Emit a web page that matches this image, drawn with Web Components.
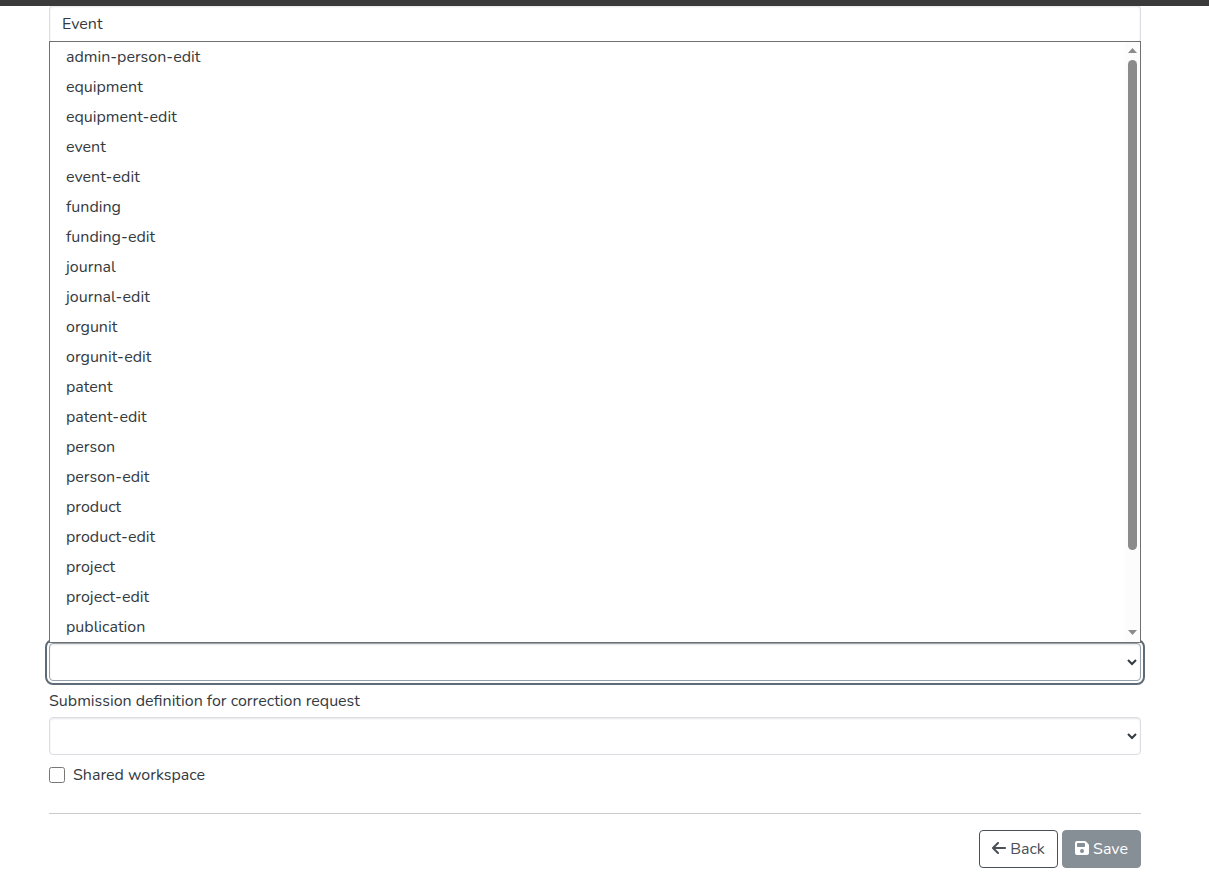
<!DOCTYPE html>
<html lang="en">
<head>
<meta charset="utf-8">
<meta name="viewport" content="width=device-width, initial-scale=1">
<title>Edit entity type</title>
<style>
  body { margin: 0; background: #fff; color: #343a40; font: 16px/24px Nunito, Lato, sans-serif; }
</style>
</head>
<body>
<entity-form></entity-form>
<script>
const control = `
  .control { box-sizing: border-box; display: block; width: 100%; height: 38px; margin: 0; padding: 6px 12px;
    font: inherit; color: inherit; background-color: #fff; border: 1px solid #dadee3; border-radius: 4px;
    box-shadow: inset 0 1px 2px rgba(0,0,0,.1); }
`;

function define(name, html, setup) {
  const template = document.createElement('template');
  template.innerHTML = html;
  customElements.define(name, class extends HTMLElement {
    connectedCallback() {
      if (this.shadowRoot) return;
      this.attachShadow({ mode: 'open' }).append(template.content.cloneNode(true));
      if (setup) setup(this, this.shadowRoot);
    }
  });
}

define('text-field', `
  <style>:host { display: block; } ${control}</style>
  <input class="control" type="text">
`, (host, root) => {
  const input = root.querySelector('input');
  input.value = host.getAttribute('value') || '';
  input.setAttribute('aria-label', host.getAttribute('name'));
});

define('select-field', `
  <style>
    :host { display: block; }
    ${control}
    label { display: block; margin-bottom: 4px; }
    label[hidden] { display: none; }
    :host([active]) .control { border-color: #98a2ab; outline: 2px solid #5f6b77; outline-offset: 2px; }
  </style>
  <label for="field"><slot></slot></label>
  <select class="control" id="field"><option value="" label=" "></option></select>
`, (host, root) => {
  if (!host.textContent.trim()) {
    root.querySelector('label').hidden = true;
    root.querySelector('select').setAttribute('aria-label', host.getAttribute('name'));
  }
});

define('option-list', `
  <style>
    :host { display: flex; position: relative; z-index: 1; background: #fff; border: 1px solid #6f7072; }
    ul { flex: 1; margin: 0; padding: 0; list-style: none; }
    li { padding: 3px 16px; }
    .scroll { display: flex; flex-direction: column; align-items: center; width: 15px; background: #fcfcfc; }
    .thumb { width: 9px; height: 490px; margin: 7px 0 auto; border-radius: 5px; background: #8b8b8b; }
    svg { display: block; width: 9px; height: 5px; margin: 6px 0 0; fill: #8b8b8b; }
    svg:last-child { margin: 0 0 7px; }
  </style>
  <ul role="listbox" aria-label="Submission definitions"></ul>
  <div class="scroll" aria-hidden="true">
    <svg viewBox="0 0 9 5"><path d="M4.500 0L9 5H0Z"/></svg>
    <div class="thumb"></div>
    <svg viewBox="0 0 9 5"><path d="M0 0H9L4.500 5Z"/></svg>
  </div>
`, (host, root) => {
  const list = root.querySelector('ul');
  for (const name of host.getAttribute('items').split(' ')) {
    const item = document.createElement('li');
    item.setAttribute('role', 'option');
    item.textContent = name;
    list.append(item);
  }
});

define('check-field', `
  <style>
    :host { display: block; }
    label { display: flex; align-items: center; gap: 8px; }
    input { width: 16px; height: 16px; margin: 0; }
  </style>
  <label><input type="checkbox"><slot></slot></label>
`);

define('action-button', `
  <style>
    :host { display: block; }
    button { display: flex; align-items: center; justify-content: center; gap: 4px; box-sizing: border-box;
      min-width: 79px; height: 38px; padding: 6px 12px; font: inherit; color: #495057;
      background: #fff; border: 1px solid #495057; border-radius: 4px; }
    :host([primary]) button { color: #fff; background: #868e96; border-color: #868e96; }
    ::slotted(svg) { display: block; width: 14px; height: 16px; margin-bottom: 2px; fill: currentColor; }
  </style>
  <button type="button"><slot name="icon"></slot><slot></slot></button>
`);

define('entity-form', `
  <style>
    :host { display: block; }
    header { position: relative; z-index: 2; height: 6px; background: #3b3a3b; }
    main { margin-top: -1px; padding: 0 68px 16px 49px; }
    option-list { margin-top: -2px; }
    .request { margin-top: 8px; }
    check-field { margin-top: 8px; }
    hr { margin: 26px 0 16px; border: 0; border-top: 1px solid #cacbcc; }
    footer { display: flex; justify-content: flex-end; gap: 4px; }
  </style>
  <header></header>
  <main>
    <text-field name="Label" value="Event"></text-field>
    <option-list items="admin-person-edit equipment equipment-edit event event-edit funding funding-edit journal journal-edit orgunit orgunit-edit patent patent-edit person person-edit product product-edit project project-edit publication"></option-list>
    <select-field active name="Submission definition"></select-field>
    <select-field class="request">Submission definition for correction request</select-field>
    <check-field>Shared workspace</check-field>
    <hr>
    <footer>
      <action-button>
        <svg slot="icon" viewBox="0 0 448 512" aria-hidden="true"><path d="M9.400 233.400c-12.500 12.500-12.500 32.800 0 45.300l160 160c12.500 12.500 32.800 12.500 45.300 0s12.500-32.800 0-45.300L109.200 288 416 288c17.700 0 32-14.300 32-32s-14.300-32-32-32l-306.700 0L214.600 118.600c12.500-12.500 12.500-32.800 0-45.300s-32.800-12.500-45.300 0l-160 160z"/></svg>Back</action-button>
      <action-button primary>
        <svg slot="icon" viewBox="0 0 448 512" aria-hidden="true"><path d="M64 32C28.700 32 0 60.700 0 96L0 416c0 35.300 28.700 64 64 64l320 0c35.300 0 64-28.700 64-64l0-242.700c0-17-6.700-33.300-18.700-45.300L352 50.700C340 38.700 323.700 32 306.700 32L64 32zm0 96c0-17.700 14.300-32 32-32l192 0c17.700 0 32 14.300 32 32l0 64c0 17.700-14.300 32-32 32L96 224c-17.700 0-32-14.300-32-32l0-64zM224 288a64 64 0 1 1 0 128 64 64 0 1 1 0-128z"/></svg>Save</action-button>
    </footer>
  </main>
`);
</script>
</body>
</html>
